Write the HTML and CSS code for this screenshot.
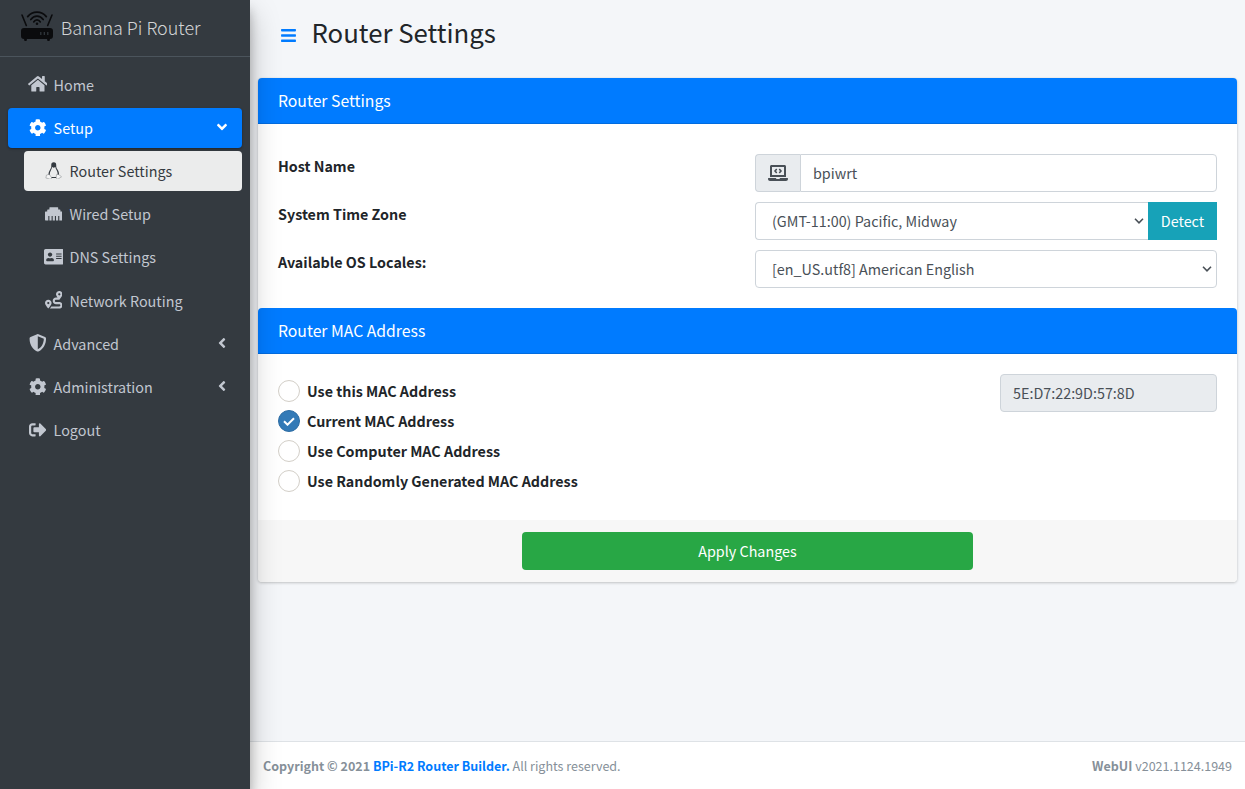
FILE: index.html
```html
<!DOCTYPE html>
<html lang="en">
<head>
<meta charset="utf-8">
<title>Router Settings</title>
<link rel="stylesheet" href="styles.css">
</head>
<body>
<svg class="defs" width="0" height="0">
  <symbol id="cog" viewBox="0 0 512 512"><path d="M487.4 315.7l-42.6-24.6c4.3-23.2 4.3-47 0-70.2l42.6-24.6c4.9-2.8 7.1-8.6 5.5-14-11.1-35.6-30-67.8-54.7-94.6-3.8-4.1-10-5.1-14.8-2.3L380.8 110c-17.9-15.4-38.5-27.3-60.8-35.1V25.8c0-5.6-3.9-10.5-9.4-11.7-36.7-8.2-74.3-7.8-109.2 0-5.5 1.2-9.4 6.1-9.4 11.7V75c-22.2 7.9-42.8 19.8-60.8 35.1L88.7 85.5c-4.9-2.8-11-1.9-14.8 2.3-24.7 26.7-43.6 58.9-54.7 94.6-1.7 5.4.6 11.2 5.5 14L67.3 221c-4.3 23.2-4.3 47 0 70.2l-42.6 24.6c-4.9 2.8-7.1 8.6-5.5 14 11.1 35.6 30 67.8 54.7 94.6 3.8 4.1 10 5.1 14.8 2.3l42.6-24.6c17.9 15.4 38.5 27.3 60.8 35.1v49.2c0 5.6 3.9 10.5 9.4 11.7 36.7 8.2 74.3 7.8 109.2 0 5.5-1.2 9.4-6.1 9.4-11.7v-49.2c22.2-7.9 42.8-19.8 60.8-35.1l42.6 24.6c4.9 2.8 11 1.9 14.8-2.3 24.7-26.7 43.6-58.9 54.7-94.6 1.5-5.5-.7-11.3-5.6-14.1zM256 336c-44.1 0-80-35.9-80-80s35.9-80 80-80 80 35.9 80 80-35.9 80-80 80z"/></symbol>
  <symbol id="angle" viewBox="0 0 256 512"><path d="M31.7 239l136-136c9.4-9.4 24.6-9.4 33.9 0l22.6 22.6c9.4 9.4 9.4 24.6 0 33.9L127.9 256l96.4 96.4c9.4 9.4 9.4 24.6 0 33.9L201.7 409c-9.4 9.4-24.6 9.4-33.9 0l-136-136c-9.5-9.4-9.5-24.6-.1-34z"/></symbol>
</svg>
<div class="wrapper">
  <aside class="sidebar">
    <a class="brand">
      <svg class="logo" viewBox="0 0 34 32"><g fill="none" stroke="#0a0b0d" stroke-linecap="round"><path d="M7.700 7.600C12.500 1.600 21.500 1.600 26.300 7.600" stroke-width="1.800"/><path d="M10.800 10.500C14 5.900 20 5.900 23.200 10.500" stroke-width="1.700"/><path d="M13.700 13C15.300 10.100 18.700 10.100 20.300 13" stroke-width="1.600"/><path d="M2 6l4.300 10.500M32 6l-4.300 10.500" stroke-width="1.600"/></g><circle cx="17" cy="14.800" r="1.300" fill="#0a0b0d"/><path fill="#0a0b0d" d="M4 19h26q3 0 3 3v5q0 3-3 3l-.5 2h-2l-.5-2H7l-.5 2h-2L4 30q-3 0-3-3v-5q0-3 3-3z"/><path d="M20.800 23v3M24.300 23v3M27.800 23v3" stroke="#343a40" stroke-width="1.200"/></svg>
      <span>Banana Pi Router</span>
    </a>
    <nav class="nav">
      <a class="item"><svg class="ico wide" viewBox="0 0 576 512"><path d="M280.37 148.26L96 300.11V464a16 16 0 0 0 16 16l112.06-.29a16 16 0 0 0 15.92-16V368a16 16 0 0 1 16-16h64a16 16 0 0 1 16 16v95.64a16 16 0 0 0 16 16.050L464 480a16 16 0 0 0 16-16V300L295.67 148.26a12.19 12.19 0 0 0-15.3 0zM571.6 251.47L488 182.56V44.050a12 12 0 0 0-12-12h-56a12 12 0 0 0-12 12v72.610L318.470 43a48 48 0 0 0-61 0L4.340 251.470a12 12 0 0 0-1.600 16.900l25.500 31A12 12 0 0 0 45.150 301l235.220-193.740a12.190 12.190 0 0 1 15.300 0L530.900 301a12 12 0 0 0 16.900-1.600l25.500-31a12 12 0 0 0-1.700-16.930z"/></svg><span>Home</span></a>
      <a class="item active"><svg class="ico"><use href="#cog"/></svg><span>Setup</span><svg class="angle open"><use href="#angle"/></svg></a>
      <a class="item sub current"><svg class="ico" viewBox="0 0 18 18"><path d="M9 .3C7.100.3 6.300 1.600 6.400 3.400c.1 1.900 0 2.700-1.100 4.200-1 1.500-1.900 3.400-1.700 5.200l1.300.4c-.1-1.900.5-3.600 1.300-5.100.6-1.200.9-2 1-3l1.700.8 1.700-.9c.2 1.200.6 2.200 1.200 3.300.8 1.600 1.300 3.100 1.100 4.600l1.300.2c.4-2-.3-3.900-1.400-5.500-1.200-1.600-1.300-2.300-1.300-4.100C11.500 1.500 10.900.3 9 .3zM6.600 15.300h4.800v1H6.600z"/><path class="thin" d="M4.300 12.600l2.600 3.500c-.4 1.800-2.100 1.600-3.300.9l-2.700-.6.6-3zM13.900 12.700l3 2.400-3.400 2.200c-1.300.5-2.200-.3-2-2l.4-2.600z"/></svg><span>Router Settings</span></a>
      <a class="item sub"><svg class="ico" viewBox="0 0 512 512"><path d="M496 192h-48v-48c0-8.800-7.200-16-16-16h-48V80c0-8.800-7.200-16-16-16H144c-8.800 0-16 7.200-16 16v48H80c-8.800 0-16 7.200-16 16v48H16c-8.800 0-16 7.200-16 16v224c0 8.800 7.200 16 16 16h80V320h32v128h64V320h32v128h64V320h32v128h64V320h32v128h80c8.800 0 16-7.200 16-16V208c0-8.800-7.200-16-16-16z"/></svg><span>Wired Setup</span></a>
      <a class="item sub"><svg class="ico wide" viewBox="0 0 576 512"><path d="M528 32H48C21.500 32 0 53.500 0 80v352c0 26.500 21.500 48 48 48h480c26.500 0 48-21.500 48-48V80c0-26.500-21.500-48-48-48zm-352 96c35.300 0 64 28.700 64 64s-28.700 64-64 64-64-28.700-64-64 28.700-64 64-64zm112 236.800c0 10.600-10 19.200-22.400 19.200H86.400C74 384 64 375.400 64 364.800v-19.200c0-31.800 30.100-57.600 67.200-57.600h5c12.300 5.100 25.700 8 39.800 8s27.600-2.900 39.800-8h5c37.100 0 67.200 25.800 67.200 57.600v19.200zM512 312c0 4.400-3.600 8-8 8H360c-4.400 0-8-3.600-8-8v-16c0-4.400 3.600-8 8-8h144c4.400 0 8 3.600 8 8v16zm0-64c0 4.400-3.600 8-8 8H360c-4.400 0-8-3.600-8-8v-16c0-4.400 3.600-8 8-8h144c4.400 0 8 3.600 8 8v16zm0-64c0 4.400-3.600 8-8 8H360c-4.400 0-8-3.600-8-8v-16c0-4.400 3.600-8 8-8h144c4.400 0 8 3.600 8 8v16z"/></svg><span>DNS Settings</span></a>
      <a class="item sub"><svg class="ico" viewBox="0 0 512 512"><path d="M416 320h-96c-17.600 0-32-14.400-32-32s14.400-32 32-32h96s96-107 96-160-43-96-96-96-96 43-96 96c0 25.500 22.200 63.400 45.300 96H320c-52.900 0-96 43.100-96 96s43.100 96 96 96h96c17.600 0 32 14.400 32 32s-14.400 32-32 32H185.500c-16 24.800-33.800 47.700-47.300 64H416c52.900 0 96-43.100 96-96s-43.100-96-96-96zm0-256c17.700 0 32 14.300 32 32s-14.300 32-32 32-32-14.300-32-32 14.300-32 32-32zM96 256c-53 0-96 43-96 96s96 160 96 160 96-107 96-160-43-96-96-96zm0 128c-17.700 0-32-14.300-32-32s14.300-32 32-32 32 14.300 32 32-14.300 32-32 32z"/></svg><span>Network Routing</span></a>
      <a class="item"><svg class="ico" viewBox="0 0 512 512"><path d="M466.500 83.700l-192-80a48.150 48.150 0 0 0-36.900 0l-192 80C27.700 91.100 16 108.600 16 128c0 198.500 114.500 335.700 221.500 380.300 11.800 4.900 25.100 4.900 36.900 0C360.100 472.600 496 349.300 496 128c0-19.400-11.700-36.900-29.500-44.300zM256.100 446.300l-.1-381 175.900 73.300c-3.300 151.400-82.100 261.100-175.800 307.700z"/></svg><span>Advanced</span><svg class="angle"><use href="#angle"/></svg></a>
      <a class="item"><svg class="ico"><use href="#cog"/></svg><span>Administration</span><svg class="angle"><use href="#angle"/></svg></a>
      <a class="item"><svg class="ico" viewBox="0 0 512 512"><path d="M497 273L329 441c-15 15-41 4.500-41-17v-96H152c-13.300 0-24-10.700-24-24v-96c0-13.300 10.700-24 24-24h136V88c0-21.400 25.900-32 41-17l168 168c9.300 9.400 9.300 24.600 0 34zM192 436v-40c0-6.600-5.400-12-12-12H96c-17.700 0-32-14.300-32-32V160c0-17.700 14.300-32 32-32h84c6.600 0 12-5.400 12-12V76c0-6.600-5.400-12-12-12H96c-53 0-96 43-96 96v192c0 53 43 96 96 96h84c6.600 0 12-5.400 12-12z"/></svg><span>Logout</span></a>
    </nav>
  </aside>
  <div class="page">
    <header class="header">
      <svg class="bars" viewBox="0 0 448 512"><path d="M16 132h416c8.800 0 16-7.200 16-16V76c0-8.800-7.200-16-16-16H16C7.200 60 0 67.200 0 76v40c0 8.800 7.200 16 16 16zm0 160h416c8.800 0 16-7.200 16-16v-40c0-8.800-7.200-16-16-16H16c-8.800 0-16 7.200-16 16v40c0 8.800 7.200 16 16 16zm0 160h416c8.800 0 16-7.200 16-16v-40c0-8.800-7.200-16-16-16H16c-8.800 0-16 7.200-16 16v40c0 8.800 7.200 16 16 16z"/></svg>
      <h1>Router Settings</h1>
    </header>
    <main class="card">
      <h2 class="card-header">Router Settings</h2>
      <div class="form">
        <div class="row">
          <label>Host Name</label>
          <div class="group">
            <span class="addon"><svg viewBox="0 0 640 512"><path d="M255.030 261.650c6.250 6.250 16.380 6.250 22.630 0l11.310-11.310c6.250-6.250 6.250-16.380 0-22.630L253.250 192l35.710-35.720c6.250-6.250 6.250-16.380 0-22.630l-11.310-11.310c-6.250-6.250-16.380-6.250-22.630 0l-58.340 58.340c-6.250 6.250-6.250 16.380 0 22.630l58.350 58.340zm96.010-11.300l11.310 11.310c6.250 6.250 16.380 6.250 22.630 0l58.340-58.340c6.250-6.250 6.250-16.380 0-22.630l-58.340-58.340c-6.250-6.250-16.380-6.250-22.630 0l-11.310 11.310c-6.250 6.250-6.250 16.380 0 22.630L386.750 192l-35.710 35.720c-6.250 6.250-6.250 16.380 0 22.630zM624 416H381.540c-.74 19.810-14.710 32-32.740 32H288c-18.690 0-33.020-17.470-32.770-32H16c-8.800 0-16 7.200-16 16v16c0 35.200 28.800 64 64 64h512c35.200 0 64-28.800 64-64v-16c0-8.800-7.200-16-16-16zM576 48c0-26.400-21.600-48-48-48H112C85.600 0 64 21.600 64 48v336h512V48zm-64 272H128V64h384v256z"/></svg></span>
            <div class="control joined"><span>bpiwrt</span></div>
          </div>
        </div>
        <div class="row">
          <label>System Time Zone</label>
          <div class="group">
            <div class="control select open-right"><span>(GMT-11:00) Pacific, Midway</span><svg class="caret" viewBox="0 0 10 6"><path d="M1 .8l4 4 4-4"/></svg></div>
            <button class="detect"><span>Detect</span></button>
          </div>
        </div>
        <div class="row">
          <label>Available OS Locales:</label>
          <div class="group">
            <div class="control select"><span>[en_US.utf8] American English</span><svg class="caret" viewBox="0 0 10 6"><path d="M1 .8l4 4 4-4"/></svg></div>
          </div>
        </div>
      </div>
      <h2 class="card-header">Router MAC Address</h2>
      <div class="mac">
        <div class="radios">
          <label class="radio"><i></i><span>Use this MAC Address</span></label>
          <label class="radio"><i class="on"><svg viewBox="0 0 12 9"><path d="M1 4.200l3.500 3.500L11 1.200"/></svg></i><span>Current MAC Address</span></label>
          <label class="radio"><i></i><span>Use Computer MAC Address</span></label>
          <label class="radio"><i></i><span>Use Randomly Generated MAC Address</span></label>
        </div>
        <div class="control"><span>5E:D7:22:9D:57:8D</span></div>
      </div>
      <div class="card-footer"><button class="apply"><span>Apply Changes</span></button></div>
    </main>
    <footer class="footer">
      <div><b>Copyright © 2021 <a>BPi-R2 Router Builder.</a></b> All rights reserved.</div>
      <div><b>WebUI</b> v2021.1124.1949</div>
    </footer>
  </div>
</div>
</body>
</html>
```
FILE: styles.css
```css
* { box-sizing: border-box; }
body { margin: 0; background: #f4f6f9; color: #212529; font: 400 14.350px/24px "Noto Sans CJK SC", "Noto Sans", sans-serif; }
.defs { display: none; }
h1, h2 { margin: 0; font-weight: 400; }
.wrapper { display: flex; height: 789px; overflow: hidden; }

.sidebar { width: 250px; flex: none; background: #343a40; color: #c2c7d0; box-shadow: 0 14px 28px rgba(0,0,0,.25), 0 10px 10px rgba(0,0,0,.22); z-index: 2; }
.brand { display: flex; align-items: center; height: 57px; padding: 0 0 2px 20px; border-bottom: 1px solid #4b545c; font-size: 17.940px; font-weight: 300; color: rgba(255,255,255,.8); }
.logo { width: 34px; height: 32px; margin: -4px 6.700px 0 0; }
.nav { padding: 7.650px 8px 8px; display: flex; flex-direction: column; gap: 3.200px; }
.item { display: flex; align-items: center; height: 40px; padding: 0 16px; border-radius: 4px; }
.ico { width: 17.600px; height: 17.600px; margin: -1px 7.300px 0 4.700px; fill: currentColor; flex: none; }
.ico.wide { width: 19.800px; margin: -1px 6.300px 0 3.500px; }
.item.active { background: #007bff; color: #fff; box-shadow: 0 1px 3px rgba(0,0,0,.12), 0 1px 2px rgba(0,0,0,.24); }
.item.sub { margin-left: 16px; }
.item.current { background: #ebecec; color: #343a40; }
.thin { fill: #fff; stroke: currentColor; stroke-width: .6; opacity: .5; }
.angle { width: 8px; height: 16px; margin: -2px 0 0 auto; fill: currentColor; }
.angle.open { transform: rotate(-90deg); }

.page { flex: 1; min-width: 0; display: flex; flex-direction: column; }
.header { height: 78px; display: flex; padding: 14px 31px; }
.bars { width: 15px; height: 17px; margin: 12.500px 15.500px 0 0; fill: #007bff; }
h1 { font-size: 25.780px; line-height: 35px; }
.card { margin: 0 8px; background: #fff; border-radius: 4px; box-shadow: 0 0 1px rgba(0,0,0,.125), 0 1px 3px rgba(0,0,0,.2); }
.card-header { height: 46px; padding: 0 20px; line-height: 45px; font-size: 15.760px; background: #007bff; color: #fff; border-bottom: 1px solid rgba(0,0,0,.125); border-radius: 4px 4px 0 0; }
.form { padding: 30px 20px 20px; display: grid; gap: 10px; }
.row { display: flex; justify-content: space-between; height: 38px; }
label { font-weight: 700; font-size: 14.310px; }
.group { display: flex; width: 462px; }
.addon { width: 45px; background: #e9ecef; border: 1px solid #ced4da; border-right: 0; border-radius: 4px 0 0 4px; display: flex; align-items: center; justify-content: center; }
.addon svg { width: 20px; height: 16px; fill: #495057; }
.control { flex: 1; display: flex; align-items: center; border: 1px solid #ced4da; border-radius: 4px; height: 38px; padding: 0 12px; color: #495057; background: #fff; }
.control.joined { border-radius: 0 4px 4px 0; }
.select { justify-content: space-between; padding: 0 4px 0 16px; }
.open-right { border-radius: 4px 0 0 4px; border-right: 0; }
.caret { width: 10px; height: 6px; fill: none; stroke: #495057; stroke-width: 1.600; }
button { border: 0; font: inherit; color: #fff; padding: 0; }
.detect { width: 69px; background: #17a2b8; }
.mac { display: flex; justify-content: space-between; height: 166px; padding: 20px; }
.mac .control { flex: none; width: 217px; background: #e9ecef; }
.radios { display: grid; grid-auto-rows: 30px; align-content: start; padding-top: 6px; }
.radio { display: flex; align-items: flex-start; line-height: 30px; }
.radio span { margin-top: -4px; }
.radio i { width: 22px; height: 22px; border: 1px solid #d3cfc8; border-radius: 50%; margin-right: 7px; background: #fff; display: grid; place-items: center; }
.radio .on { background: #337ab7; border-color: #2e6da4; }
.radio svg { width: 12px; height: 9px; fill: none; stroke: #fff; stroke-width: 2; }
.card-footer { height: 62px; padding: 12px 0; background: #f7f7f7; border-radius: 0 0 4px 4px; display: flex; justify-content: center; }
.apply { width: 451px; height: 38px; border-radius: 4px; background: #28a745; }
.footer { margin-top: auto; height: 48px; border-top: 1px solid #dee2e6; background: #fff; color: #869099; display: flex; justify-content: space-between; padding: 0 13px; font-size: 12.530px; line-height: 48px; }
.footer a { color: #007bff; }
```
